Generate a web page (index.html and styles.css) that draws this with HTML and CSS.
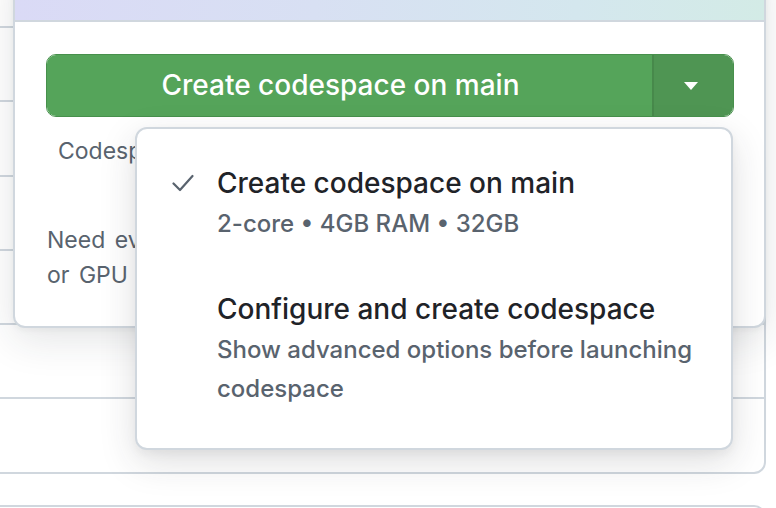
FILE: index.html
```html
<!DOCTYPE html>
<html lang="en">
<head>
<meta charset="utf-8">
<title>Create codespace</title>
<link rel="stylesheet" href="styles.css">
</head>
<body>
<div class="page">
  <div class="files">
    <div class="row first"></div>
    <div class="row"></div>
    <div class="row"></div>
    <div class="row"></div>
    <div class="row"></div>
    <div class="row"></div>
    <div class="row"></div>
  </div>
  <div class="files2"></div>

  <section class="card">
    <div class="card-head"></div>
    <div class="card-body">
      <div class="split-btn">
        <button class="btn-main">Create codespace on main</button>
        <button class="btn-caret" aria-label="More options">
          <svg width="14" height="8" viewBox="0 0 14 8"><path d="M0 0h14L7 8z" fill="#fff"/></svg>
        </button>
      </div>
      <p class="usage">Codespace usage for this repository is paid for by you.</p>
      <p class="more">Need even more power? Try a larger machine type<br>or GPU for your codespaces.</p>
    </div>
  </section>

  <div class="menu" role="menu">
    <div class="item" role="menuitemradio" aria-checked="true">
      <svg class="check" width="22" height="18" viewBox="0 0 22 18"><path d="M1.5 9.5 L8 16 L20.5 2" fill="none" stroke="#59636e" stroke-width="2.2" stroke-linecap="round" stroke-linejoin="round"/></svg>
      <div class="item-text">
        <div class="item-title">Create codespace on main</div>
        <div class="item-sub">2-core • 4GB RAM • 32GB</div>
      </div>
    </div>
    <div class="item" role="menuitemradio" aria-checked="false">
      <span class="check"></span>
      <div class="item-text">
        <div class="item-title">Configure and create codespace</div>
        <div class="item-sub">Show advanced options before launching codespace</div>
      </div>
    </div>
  </div>
</div>
</body>
</html>
```

FILE: styles.css
```css
* { box-sizing: border-box; }
html, body { margin: 0; padding: 0; }
body {
  width: 776px;
  height: 508px;
  overflow: hidden;
  background: #ffffff;
  font-family: Inter, "Noto Sans", "Liberation Sans", sans-serif;
  color: #1f2328;
}
.page {
  position: relative;
  width: 776px;
  height: 508px;
  overflow: hidden;
}

/* underlying file list */
.files {
  margin: -49px 0 0 -20px;
  width: 786px;
  border: 2px solid #d0d7de;
  border-radius: 12px;
  background: #fff;
}
.row {
  height: 74.3px;
  border-top: 2px solid #d0d7de;
}
.row.first {
  height: 73px;
  border-top: 0;
}
.files2 {
  margin: 31px 0 0 -20px;
  width: 786px;
  height: 60px;
  border: 2px solid #d0d7de;
  border-radius: 12px;
}

/* codespaces card overlay */
.card {
  position: absolute;
  left: 13px;
  top: -40px;
  width: 753px;
  background: #fff;
  border: 2px solid #d0d7de;
  border-top: 0;
  border-radius: 0 0 12px 12px;
  box-shadow: 0 12px 40px rgba(37, 41, 46, 0.12), 0 2px 6px rgba(37, 41, 46, 0.05);
}
.card-head {
  height: 62px;
  background: linear-gradient(90deg, #dadaf6 0%, #d8e0f3 40%, #d4e7ee 75%, #d3ebe6 100%);
  border-bottom: 2px solid #d0d7de;
}
.card-body {
  padding: 32px 30px 33px 31px;
}
.split-btn {
  display: flex;
  height: 63px;
  border: 1.5px solid #47904c;
  border-radius: 10px;
  overflow: hidden;
}
.split-btn button {
  border: 0;
  margin: 0;
  font-family: inherit;
  color: #fff;
  cursor: pointer;
}
.btn-main {
  flex: 1;
  background: #55a45a;
  font-size: 28px;
  font-weight: 500;
  padding: 0 18px 2px 0;
}
.btn-caret {
  width: 81px;
  background: #4f9553;
  border-left: 2px solid #47894b !important;
  display: flex;
  align-items: center;
  justify-content: center;
  padding-left: 0;
}
.usage {
  margin: 17px 0 0 12px;
  font-size: 23px;
  line-height: 35px;
  color: #59636e;
  white-space: nowrap;
}
.more {
  margin: 54px 0 0 1px;
  font-size: 23px;
  line-height: 35px;
  word-spacing: 3px;
  color: #59636e;
}

/* dropdown menu overlay */
.menu {
  position: absolute;
  left: 135px;
  top: 127px;
  width: 598px;
  height: 323px;
  background: #fff;
  border: 2px solid #d0d7de;
  border-radius: 12px;
  box-shadow: 0 12px 36px rgba(37, 41, 46, 0.15), 0 4px 10px rgba(37, 41, 46, 0.05);
  padding: 36px 18px 40px 35px;
  display: flex;
  flex-direction: column;
  gap: 48px;
}
.item {
  display: flex;
  align-items: flex-start;
  gap: 23px;
}
.check {
  flex: none;
  width: 22px;
  height: 18px;
  margin-top: 9px;
}
.item-title {
  font-size: 28px;
  font-weight: 500;
  line-height: 36px;
  color: #1f2328;
}
.item-sub {
  margin-top: 3px;
  font-size: 24px;
  font-weight: 500;
  line-height: 39px;
  color: #59636e;
}
```
